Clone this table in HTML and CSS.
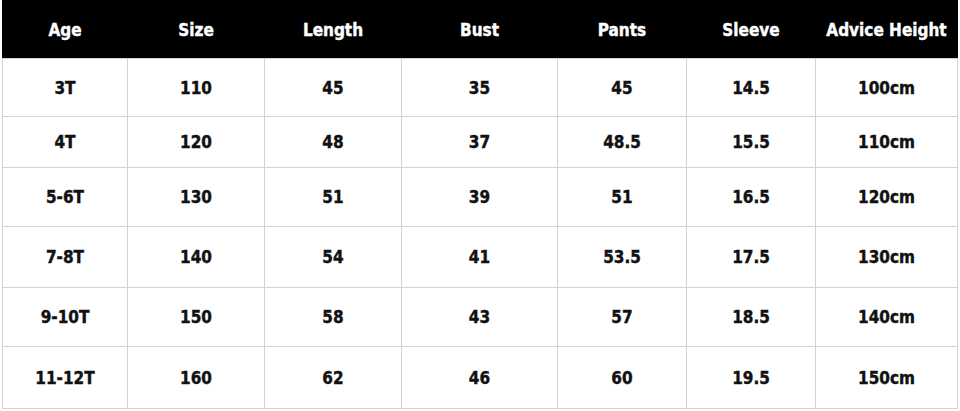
FILE: index.html
```html
<!DOCTYPE html>
<html>
<head>
<meta charset="utf-8">
<link rel="stylesheet" href="styles.css">
</head>
<body>
<div class="chart">
  <div class="head">
    <div>Age</div><div>Size</div><div>Length</div><div>Bust</div><div>Pants</div><div>Sleeve</div><div>Advice Height</div>
  </div>
  <div class="body">
    <div>3T</div><div>110</div><div>45</div><div>35</div><div>45</div><div>14.5</div><div>100cm</div>
    <div>4T</div><div>120</div><div>48</div><div>37</div><div>48.5</div><div>15.5</div><div>110cm</div>
    <div>5-6T</div><div>130</div><div>51</div><div>39</div><div>51</div><div>16.5</div><div>120cm</div>
    <div>7-8T</div><div>140</div><div>54</div><div>41</div><div>53.5</div><div>17.5</div><div>130cm</div>
    <div>9-10T</div><div>150</div><div>58</div><div>43</div><div>57</div><div>18.5</div><div>140cm</div>
    <div>11-12T</div><div>160</div><div>62</div><div>46</div><div>60</div><div>19.5</div><div>150cm</div>
  </div>
</div>
</body>
</html>
```
FILE: styles.css
```css
html, body {
  margin: 0;
  padding: 0;
  background: #ffffff;
}
.chart {
  margin-left: 2px;
  width: 956px;
  font-family: "DejaVu Sans Condensed", "DejaVu Sans", sans-serif;
  font-stretch: condensed;
  font-weight: bold;
}
.head, .body {
  display: grid;
  grid-template-columns: 124px 136px 136px 155px 128px 128px 141px;
  column-gap: 1px;
  padding: 0 1px;
}
.head {
  background: #000;
  color: #fff;
  height: 58px;
  box-sizing: border-box;
  padding-top: 2px;
  font-size: 17px;
  -webkit-text-stroke: 0.4px #fff;
}
.body {
  background: #d3d3d3;
  row-gap: 1px;
  padding-top: 1px;
  padding-bottom: 1px;
  grid-template-rows: 57px 50px 58px 60px 58px 61px;
  color: #111;
  font-size: 17px;
  -webkit-text-stroke: 0.4px #111;
}
.head > div, .body > div {
  display: flex;
  align-items: center;
  justify-content: center;
}
.body > div {
  background: #fff;
}
```
